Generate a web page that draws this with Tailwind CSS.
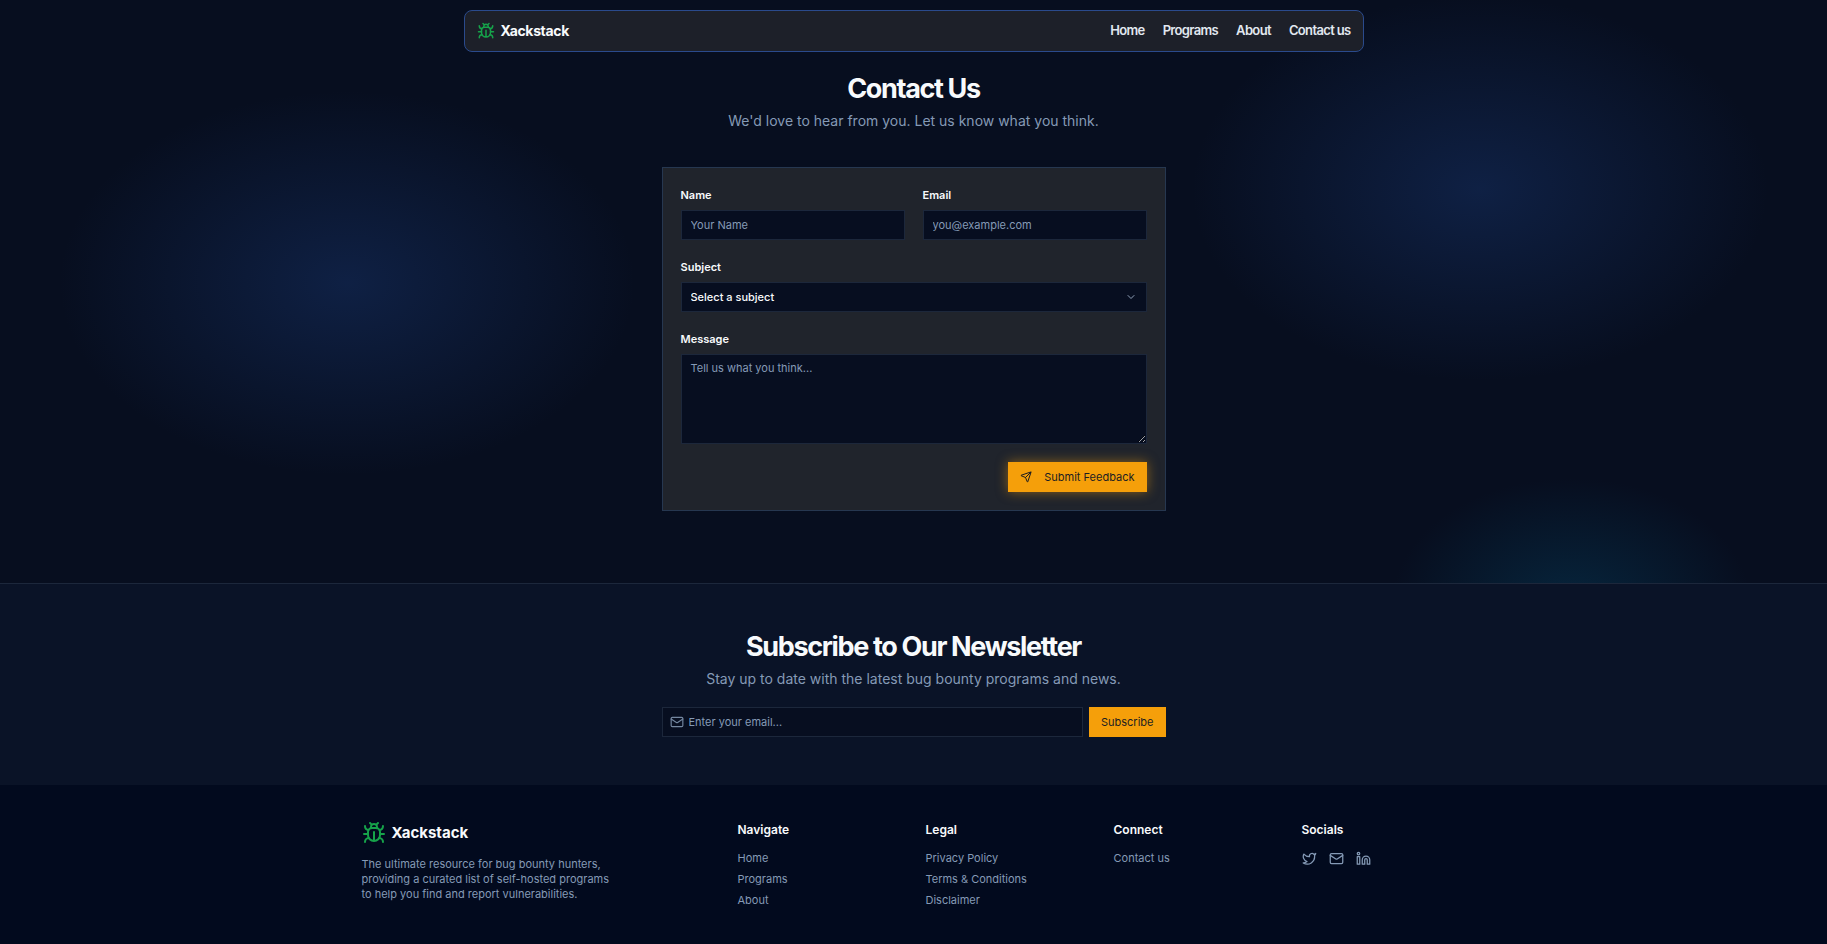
<!DOCTYPE html>
<html lang="en">
<head>
  <meta charset="UTF-8">
  <title>Contact Us | Xackstack</title>
  <meta name="viewport" content="width=device-width, initial-scale=1.0">
  <script src="https://cdn.jsdelivr.net/npm/@tailwindcss/browser@4"></script>
</head>
<body class="min-h-screen flex flex-col bg-[#020a1e] font-[Inter,sans-serif] text-slate-50">
  <!-- shared icons -->
  <svg class="hidden" aria-hidden="true">
    <symbol id="bug" viewBox="0 0 24 24" fill="none" stroke="currentColor" stroke-width="2" stroke-linecap="round" stroke-linejoin="round">
      <path d="m8 2 1.880 1.880M14.120 3.880 16 2M9 7.130v-1a3.003 3.003 0 1 1 6 0v1"/>
      <path d="M12 20c-3.300 0-6-2.700-6-6v-3a4 4 0 0 1 4-4h4a4 4 0 0 1 4 4v3c0 3.300-2.700 6-6 6M12 20v-9"/>
      <path d="M6.530 9C4.600 8.800 3 7.100 3 5M6 13H2M3 21c0-2.100 1.700-3.900 3.800-4M20.970 5c0 2.100-1.600 3.800-3.500 4M22 13h-4M17.200 17c2.100.1 3.800 1.900 3.800 4"/>
    </symbol>
    <symbol id="mail" viewBox="0 0 24 24" fill="none" stroke="currentColor" stroke-width="2" stroke-linecap="round" stroke-linejoin="round">
      <rect width="20" height="16" x="2" y="4" rx="2"/>
      <path d="m22 7-8.970 5.700a1.940 1.940 0 0 1-2.060 0L2 7"/>
    </symbol>
  </svg>

  <main class="px-4 pt-[10px] pb-[72px] bg-[#070e1f] bg-[radial-gradient(288px_192px_at_19%_283px,rgba(30,68,140,0.34),transparent),radial-gradient(288px_192px_at_81%_189px,rgba(30,68,140,0.34),transparent),radial-gradient(180px_128px_at_86%_606px,rgba(6,60,90,0.5),transparent)]">
    <header class="max-w-[900px] mx-auto h-[42px] px-3 flex items-center justify-between rounded-lg border border-[#2a4a8c] bg-[#1d2029]">
      <a href="#" class="flex items-center gap-1.5 text-sm font-bold tracking-tight">
        <svg class="size-[18px] text-[#16a34a]"><use href="#bug"/></svg>
        Xackstack
      </a>
      <nav class="flex gap-[18px] text-[13px] font-semibold tracking-tighter text-slate-200">
        <a href="#">Home</a>
        <a href="#">Programs</a>
        <a href="#">About</a>
        <a href="#">Contact us</a>
      </nav>
    </header>

    <div class="mt-[22px] text-center">
      <h1 class="text-[27px] leading-[30px] font-bold tracking-tighter">Contact Us</h1>
      <p class="mt-1.5 text-[14px] leading-[21px] text-[#859ab6]">We'd love to hear from you. Let us know what you think.</p>
    </div>

    <form class="max-w-[504px] mx-auto mt-9 p-[18px] border border-[#263750] bg-[#20242c]">
      <div class="grid grid-cols-2 gap-[18px]">
        <div>
          <label for="name" class="block text-[11px] leading-[18px] font-semibold">Name</label>
          <input id="name" type="text" placeholder="Your Name" class="mt-1.5 block w-full h-[30px] px-[9px] border border-[#1c273b] bg-[#070e20] text-[11px] placeholder-[#859ab6]">
        </div>
        <div>
          <label for="email" class="block text-[11px] leading-[18px] font-semibold">Email</label>
          <input id="email" type="email" placeholder="you@example.com" class="mt-1.5 block w-full h-[30px] px-[9px] border border-[#1c273b] bg-[#070e20] text-[11px] placeholder-[#859ab6]">
        </div>
      </div>
      <div class="mt-[18px]">
        <label for="subject" class="block text-[11px] leading-[18px] font-semibold">Subject</label>
        <div class="relative mt-1.5">
          <select id="subject" class="block w-full h-[30px] px-[9px] appearance-none border border-[#1c273b] bg-[#070e20] text-[11px] font-medium">
            <option>Select a subject</option>
          </select>
          <svg class="absolute right-[10px] top-[9px] size-3 text-slate-400 pointer-events-none" viewBox="0 0 24 24" fill="none" stroke="currentColor" stroke-width="2" stroke-linecap="round" stroke-linejoin="round"><path d="m6 9 6 6 6-6"/></svg>
        </div>
      </div>
      <div class="mt-[18px]">
        <label for="message" class="block text-[11px] leading-[18px] font-semibold">Message</label>
        <textarea id="message" placeholder="Tell us what you think..." class="mt-1.5 block w-full h-[90px] px-[9px] py-1.5 border border-[#1c273b] bg-[#070e20] text-[11px] leading-[15px] placeholder-[#859ab6]"></textarea>
      </div>
      <div class="mt-[18px] flex justify-end">
        <button type="submit" class="h-[30px] px-3 flex items-center gap-3 bg-[#f59f0a] text-[11px] text-[#1c1d22] shadow-[0_0_12px_rgba(245,159,10,0.5)]">
          <svg class="size-3" viewBox="0 0 24 24" fill="none" stroke="currentColor" stroke-width="2" stroke-linecap="round" stroke-linejoin="round"><path d="M14.536 21.686a.5.5 0 0 0 .937-.024l6.500-19a.496.496 0 0 0-.635-.635l-19 6.500a.5.5 0 0 0-.024.937l7.930 3.180a2 2 0 0 1 1.112 1.110zM21.854 2.147l-10.940 10.939"/></svg>
          Submit Feedback
        </button>
      </div>
    </form>
  </main>

  <section class="px-4 py-12 border-t border-[#1c273b] bg-[#0a1327] text-center">
    <h2 class="text-[27px] leading-[30px] font-bold tracking-tighter">Subscribe to Our Newsletter</h2>
    <p class="mt-1.5 text-[14px] leading-[21px] text-[#859ab6]">Stay up to date with the latest bug bounty programs and news.</p>
    <form class="max-w-[504px] mx-auto mt-[18px] flex gap-1.5">
      <div class="relative flex-1">
        <svg class="absolute left-2 top-2 size-3.5 text-[#7487a0] pointer-events-none"><use href="#mail"/></svg>
        <input type="email" aria-label="Email address" placeholder="Enter your email..." class="block w-full h-[30px] pl-[26px] pr-2 border border-[#1c273b] bg-[#070e20] text-[11px] placeholder-[#859ab6]">
      </div>
      <button type="submit" class="h-[30px] px-3 bg-[#f59f0a] text-[11px] text-[#1c1d22]">Subscribe</button>
    </form>
  </section>

  <footer class="flex-1 px-4 py-9">
    <div class="max-w-[1104px] mx-auto grid grid-cols-6 gap-6">
      <div class="col-span-2">
        <a href="#" class="flex items-center gap-1.5 text-[15px] leading-6 font-bold">
          <svg class="size-6 text-[#16a34a]"><use href="#bug"/></svg>
          Xackstack
        </a>
        <p class="mt-3 max-w-[256px] text-[11px] leading-[15px] text-[#859ab6]">The ultimate resource for bug bounty hunters, providing a curated list of self-hosted programs to help you find and report vulnerabilities.</p>
      </div>
      <div>
        <h3 class="text-xs leading-[18px] font-semibold">Navigate</h3>
        <ul class="mt-3 space-y-1.5 text-[11px] leading-[15px] text-[#859ab6]">
          <li><a href="#">Home</a></li>
          <li><a href="#">Programs</a></li>
          <li><a href="#">About</a></li>
        </ul>
      </div>
      <div>
        <h3 class="text-xs leading-[18px] font-semibold">Legal</h3>
        <ul class="mt-3 space-y-1.5 text-[11px] leading-[15px] text-[#859ab6]">
          <li><a href="#">Privacy Policy</a></li>
          <li><a href="#">Terms &amp; Conditions</a></li>
          <li><a href="#">Disclaimer</a></li>
        </ul>
      </div>
      <div>
        <h3 class="text-xs leading-[18px] font-semibold">Connect</h3>
        <ul class="mt-3 text-[11px] leading-[15px] text-[#859ab6]">
          <li><a href="#">Contact us</a></li>
        </ul>
      </div>
      <div>
        <h3 class="text-xs leading-[18px] font-semibold">Socials</h3>
        <div class="mt-3 flex gap-3 text-[#859ab6]">
          <a href="#" aria-label="Twitter"><svg class="size-[15px]" viewBox="0 0 24 24" fill="none" stroke="currentColor" stroke-width="2" stroke-linecap="round" stroke-linejoin="round"><path d="M22 4s-.7 2.100-2 3.400c1.600 10-9.400 17.300-18 11.600 2.200.1 4.400-.6 6-2C3 15.500.5 9.600 3 5c2.200 2.600 5.600 4.100 9 4-.9-4.200 4-6.600 7-3.800 1.100 0 3-1.200 3-1.200z"/></svg></a>
          <a href="#" aria-label="Email"><svg class="size-[15px]"><use href="#mail"/></svg></a>
          <a href="#" aria-label="LinkedIn"><svg class="size-[15px]" viewBox="0 0 24 24" fill="none" stroke="currentColor" stroke-width="2" stroke-linecap="round" stroke-linejoin="round"><path d="M16 8a6 6 0 0 1 6 6v7h-4v-7a2 2 0 0 0-4 0v7h-4v-7a6 6 0 0 1 6-6z"/><rect width="4" height="12" x="2" y="9"/><circle cx="4" cy="4" r="2"/></svg></a>
        </div>
      </div>
    </div>
  </footer>
</body>
</html>
